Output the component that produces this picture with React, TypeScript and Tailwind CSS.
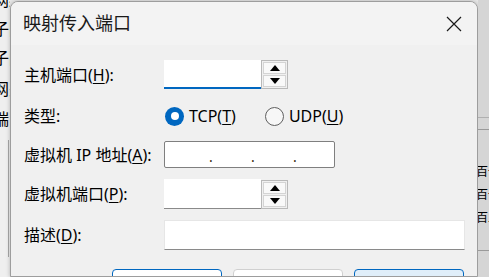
import React from 'react';

const font = { fontFamily: '"Noto Sans", "Noto Sans CJK SC", sans-serif' };

function Spin() {
  return (
    <div className="flex h-[29px] w-[27px] flex-col gap-px border border-[#b9b9b9] bg-[#f0f0f0] p-px">
      <div className="flex flex-1 items-center justify-center border border-[#d4d4d4] bg-[#f9f9f9]">
        <svg width="10" height="6" viewBox="0 0 10 6">
          <path d="M5 0L10 6H0Z" fill="#000" />
        </svg>
      </div>
      <div className="flex flex-1 items-center justify-center border border-[#d4d4d4] bg-[#f9f9f9]">
        <svg width="10" height="6" viewBox="0 0 10 6">
          <path d="M0 0H10L5 6Z" fill="#000" />
        </svg>
      </div>
    </div>
  );
}

function Label({ text, k, tail }: { text: string; k: string; tail?: string }) {
  return (
    <div className="w-[140px] shrink-0 whitespace-nowrap text-[16px] text-black">
      {text}(<span className="underline underline-offset-2">{k}</span>){tail ?? ':'}
    </div>
  );
}

export default function App() {
  return (
    <div className="flex h-[277px] w-[489px] overflow-hidden bg-[#e9e9e9]" style={font}>
      {/* background window, left */}
      <div className="flex w-[10px] shrink-0 flex-col overflow-hidden bg-[#efefef] text-[16px] leading-none text-black">
        <div className="ml-[-7px] mt-[-8px] h-[18px] whitespace-nowrap">网络</div>
        <div className="ml-[-7px] mt-[11px] whitespace-nowrap">子网</div>
        <div className="ml-[-7px] mt-[13px] whitespace-nowrap">子网</div>
        <div className="ml-[-7px] mt-[15px] whitespace-nowrap">网关</div>
        <div className="ml-[-7px] mt-[14px] whitespace-nowrap">端口</div>
        <div className="ml-[8px] mt-[13px] h-[117px] w-px bg-[#a8a8a8]" />
      </div>

      {/* dialog */}
      <div className="mt-[1px] flex w-[468px] shrink-0 flex-col overflow-hidden rounded-t-[8px] border border-[#9d9d9d] bg-[#f0f0f0] shadow-[0_0_4px_rgba(0,0,0,0.25)]">
        <div className="flex h-[43px] shrink-0 items-center justify-between bg-[#f3f3f3] pl-[12px]">
          <span className="text-[18px] text-[#1a1a1a]">映射传入端口</span>
          <div className="flex h-full w-[46px] items-center justify-center">
            <svg width="16" height="16" viewBox="0 0 16 16">
              <path d="M1 1L15 15M15 1L1 15" stroke="#1a1a1a" strokeWidth="1.2" />
            </svg>
          </div>
        </div>

        <div className="flex flex-col pl-[13px]">
          <div className="mt-[15px] flex h-[29px] items-center">
            <Label text="主机端口" k="H" />
            <div className="h-[29px] w-[97px] border-b-2 border-[#0067c0] bg-white" />
            <Spin />
          </div>

          <div className="mt-[17px] flex h-[20px] items-center">
            <div className="w-[140px] shrink-0 text-[16px] text-black">类型:</div>
            <div className="ml-[1px] flex h-[19px] w-[19px] items-center justify-center rounded-full bg-[#0067c0]">
              <div className="h-[8px] w-[8px] rounded-full bg-white" />
            </div>
            <span className="ml-[5px] text-[16px] text-black">
              TCP(<span className="underline underline-offset-2">T</span>)
            </span>
            <div className="ml-[29px] h-[19px] w-[19px] rounded-full border border-[#5f5f5f] bg-[#f7f7f7]" />
            <span className="ml-[5px] text-[16px] text-black">
              UDP(<span className="underline underline-offset-2">U</span>)
            </span>
          </div>

          <div className="mt-[15px] flex h-[27px] items-center">
            <Label text="虚拟机 IP 地址" k="A" />
            <div className="flex h-[27px] w-[171px] items-center rounded-[2px] border border-[#7f7f7f] bg-white pl-[44px] pt-[4px] text-[14px] leading-none text-[#3a2a10]">
              <span className="w-[42px]">.</span>
              <span className="w-[42px]">.</span>
              <span>.</span>
            </div>
          </div>

          <div className="mt-[11px] flex h-[30px] items-center">
            <Label text="虚拟机端口" k="P" />
            <div className="h-[30px] w-[97px] border-b border-[#8a8a8a] bg-white" />
            <Spin />
          </div>

          <div className="mt-[11px] flex h-[30px] items-center">
            <Label text="描述" k="D" />
            <div className="h-[30px] w-[301px] border border-[#e6e6e6] border-b-[#8a8a8a] bg-white" />
          </div>

          <div className="mt-[19px] flex gap-[11px] pl-[88px]">
            <div className="flex h-[32px] w-[110px] items-center justify-center rounded-[4px] border border-[#0067c0] bg-white text-[15px]">确定</div>
            <div className="flex h-[32px] w-[110px] items-center justify-center rounded-[4px] border border-[#d0d0d0] bg-white text-[15px]">取消</div>
            <div className="flex h-[32px] w-[110px] items-center justify-center rounded-[4px] border border-[#0067c0] bg-[#e0eef9] text-[15px]">帮助</div>
          </div>
        </div>
      </div>

      {/* background window, right */}
      <div className="flex w-[11px] shrink-0 flex-col overflow-hidden bg-[#d5d5d5] text-[12px] leading-none text-black">
        <div className="mt-[117px] h-px bg-[#b0b0b0]" />
        <div className="mt-[11px] h-px bg-[#9a9a9a]" />
        <div className="ml-[-2px] mt-[36px] whitespace-nowrap">百一</div>
        <div className="ml-[-2px] mt-[11px] whitespace-nowrap">百一</div>
        <div className="ml-[-2px] mt-[11px] whitespace-nowrap">百二</div>
        <div className="mt-[26px] h-px bg-[#9a9a9a]" />
      </div>
    </div>
  );
}
